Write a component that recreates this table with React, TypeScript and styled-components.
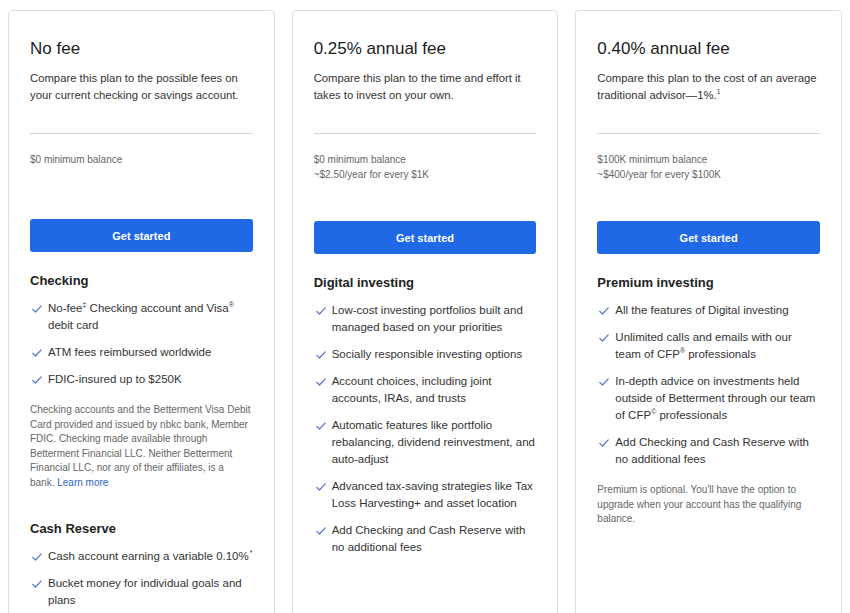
import React, { FC, ReactNode } from 'react'
import styled, { createGlobalStyle } from 'styled-components'

const GlobalStyle = createGlobalStyle`
  body {
    margin: 8px;
    background: #fff;
    font-family: "Liberation Sans", Arial, sans-serif;
  }
`

const Plans = styled.div`
  display: grid;
  grid-template-columns: repeat(3, 1fr);
  column-gap: 17px;
  padding-top: 2px;
  align-items: stretch;
`

const Card = styled.section`
  display: flex;
  flex-direction: column;
  padding: 27px 21px 26px;
  border: 1px solid #dedede;
  border-radius: 4px;
  background: #fff;
`

const Fee = styled.h2`
  margin: 0;
  font-size: 17px;
  line-height: 22px;
  font-weight: 400;
  color: #1c1c1c;
`

const Description = styled.p`
  margin: 10px 0 0;
  font-size: 11.3px;
  line-height: 17px;
  color: #333;
`

const Divider = styled.hr`
  margin: 29px 0 0;
  border: none;
  border-top: 1px solid #d6d6d6;
`

const Balance = styled.div`
  margin-top: 18px;
  min-height: 28px;
  font-size: 10px;
  line-height: 15px;
  color: #666;
`

const Button = styled.button`
  margin-top: 39px;
  width: 100%;
  height: 33px;
  border: none;
  border-radius: 3px;
  background: #1f69e6;
  color: #fff;
  font-family: inherit;
  font-size: 11px;
  font-weight: 700;
  cursor: pointer;
`

const SectionTitle = styled.h3<{ $gap: number }>`
  margin: ${p => p.$gap}px 0 0;
  font-size: 13px;
  line-height: 18px;
  font-weight: 700;
  color: #222;
`

const List = styled.ul`
  display: flex;
  flex-direction: column;
  gap: 10px;
  margin: 10px 0 0;
  padding: 0;
  list-style: none;
`

const Item = styled.li`
  display: grid;
  grid-template-columns: 18px 1fr;
  font-size: 11.5px;
  line-height: 17px;
  color: #333;
`

const Tick = styled.svg`
  margin: 5px 0 0 2px;
`

const Note = styled.p`
  margin: 15px 0 0;
  padding-right: 1.7px;
  font-size: 10px;
  line-height: 14.6px;
  color: #666;
`

const Link = styled.a`
  color: #2a64c8;
  text-decoration: none;
`

const Sup = styled.span`
  display: inline-block;
  font-size: 0.6em;
  line-height: 1;
  vertical-align: 0.7em;
`

const Star = styled(Sup)`
  margin-left: 1px;
`

const Check: FC = () => (
  <Tick width="10" height="8" viewBox="0 0 10 8">
    <path d="M0.8 4.4 L3.5 7 L9.2 0.9" fill="none" stroke="#5b78c9" strokeWidth="1.3" strokeLinecap="round" strokeLinejoin="round" />
  </Tick>
)

interface Section {
  title: string
  items: ReactNode[]
  note?: ReactNode
}

interface Plan {
  fee: string
  description: ReactNode
  balance: string[]
  sections: Section[]
}

const plans: Plan[] = [
  {
    fee: 'No fee',
    description: 'Compare this plan to the possible fees on your current checking or savings account.',
    balance: ['$0 minimum balance'],
    sections: [
      {
        title: 'Checking',
        items: [
          <>No-fee<Sup>‡</Sup> Checking account and Visa<Sup>®</Sup> debit card</>,
          'ATM fees reimbursed worldwide',
          'FDIC-insured up to $250K'
        ],
        note: (
          <>
            Checking accounts and the Betterment Visa Debit Card provided and issued by nbkc bank, Member FDIC. Checking
            made available through Betterment Financial LLC. Neither Betterment Financial LLC, nor any of their affiliates,
            is a bank. <Link href="#">Learn more</Link>
          </>
        )
      },
      {
        title: 'Cash Reserve',
        items: [<>Cash account earning a variable 0.10%<Star>*</Star></>, 'Bucket money for individual goals and plans']
      }
    ]
  },
  {
    fee: '0.25% annual fee',
    description: 'Compare this plan to the time and effort it takes to invest on your own.',
    balance: ['$0 minimum balance', '~$2.50/year for every $1K'],
    sections: [
      {
        title: 'Digital investing',
        items: [
          'Low-cost investing portfolios built and managed based on your priorities',
          'Socially responsible investing options',
          'Account choices, including joint accounts, IRAs, and trusts',
          'Automatic features like portfolio rebalancing, dividend reinvestment, and auto-adjust',
          'Advanced tax-saving strategies like Tax Loss Harvesting+ and asset location',
          'Add Checking and Cash Reserve with no additional fees'
        ]
      }
    ]
  },
  {
    fee: '0.40% annual fee',
    description: <>Compare this plan to the cost of an average traditional advisor—1%.<Sup>1</Sup></>,
    balance: ['$100K minimum balance', '~$400/year for every $100K'],
    sections: [
      {
        title: 'Premium investing',
        items: [
          'All the features of Digital investing',
          <>Unlimited calls and emails with our team of CFP<Sup>®</Sup> professionals</>,
          <>In-depth advice on investments held outside of Betterment through our team of CFP<Sup>©</Sup> professionals</>,
          'Add Checking and Cash Reserve with no additional fees'
        ],
        note: "Premium is optional. You'll have the option to upgrade when your account has the qualifying balance."
      }
    ]
  }
]

const PlanCard: FC<{ plan: Plan }> = ({ plan }) => (
  <Card>
    <Fee>{plan.fee}</Fee>
    <Description>{plan.description}</Description>
    <Divider />
    <Balance>
      {plan.balance.map(line => (
        <div key={line}>{line}</div>
      ))}
    </Balance>
    <Button>Get started</Button>
    {plan.sections.map((section, i) => (
      <React.Fragment key={section.title}>
        <SectionTitle $gap={i === 0 ? 20 : 29}>{section.title}</SectionTitle>
        <List>
          {section.items.map((item, j) => (
            <Item key={j}>
              <Check />
              <span>{item}</span>
            </Item>
          ))}
        </List>
        {section.note && <Note>{section.note}</Note>}
      </React.Fragment>
    ))}
  </Card>
)

export default function App() {
  return (
    <>
      <GlobalStyle />
      <Plans>
        {plans.map(plan => (
          <PlanCard key={plan.fee} plan={plan} />
        ))}
      </Plans>
    </>
  )
}
